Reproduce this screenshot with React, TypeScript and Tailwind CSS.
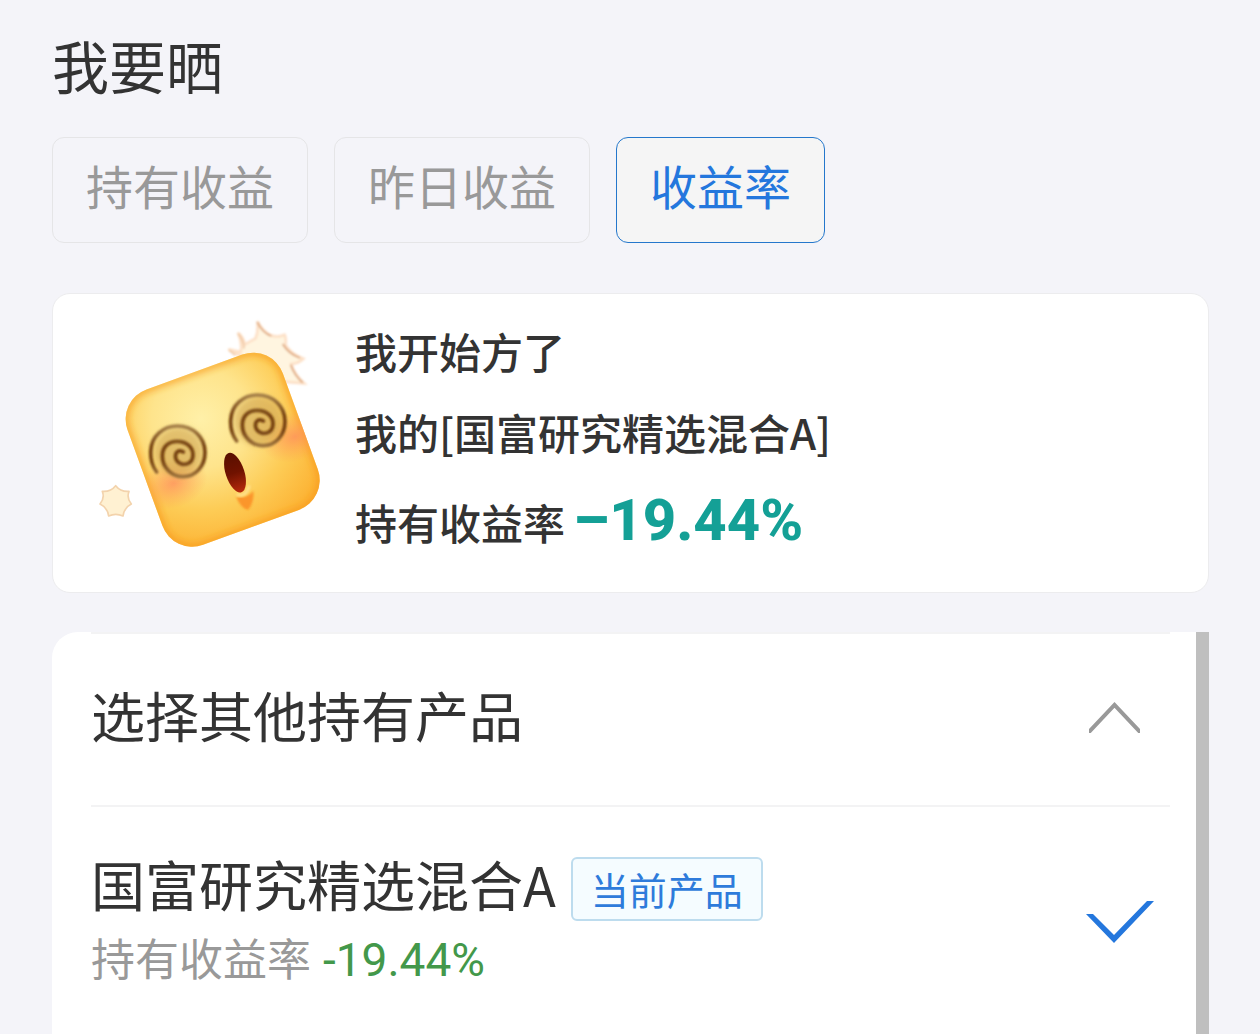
import { useState } from "react";
import clsx from "clsx";

const tabs = [
    { id: 1, label: "持有收益" },
    { id: 2, label: "昨日收益" },
    { id: 3, label: "收益率" },
];

const products = [{ id: 1, name: "国富研究精选混合A", rate: "-19.44%" }];

const SPIRAL =
    "M230 516 C218 500 211 478 212 454 C214 408 250 378 292 378 C340 378 374 412 375 456 C375 500 346 530 310 530 C274 530 247 502 247 468 C247 438 268 424 291 424 C320 424 340 442 339 466 C338 486 324 494 308 493 C290 490 283 474 288 460 C292 452 302 450 310 456";

const DizzyFace = () => (
    <svg
        viewBox="0 0 780 810"
        className="mt-[6px] h-[270px] w-[260px] shrink-0"
        aria-hidden="true"
    >
        <defs>
            <radialGradient id="face" cx="0.44" cy="0.28" r="0.85">
                <stop offset="0" stopColor="#fff0a8" />
                <stop offset="0.35" stopColor="#fee48c" />
                <stop offset="0.65" stopColor="#fdcc56" />
                <stop offset="1" stopColor="#fcae2e" />
            </radialGradient>
            <radialGradient id="blush">
                <stop offset="0" stopColor="#ff8c5c" stopOpacity="0.75" />
                <stop offset="1" stopColor="#ff9a50" stopOpacity="0" />
            </radialGradient>
            <linearGradient id="mouth" x1="0" y1="0" x2="0" y2="1">
                <stop offset="0" stopColor="#581000" />
                <stop offset="0.5" stopColor="#701200" />
                <stop offset="1" stopColor="#b82a0c" />
            </linearGradient>
            <linearGradient id="swirl" x1="0" y1="0" x2="0" y2="1">
                <stop offset="0" stopColor="#a58048" />
                <stop offset="0.4" stopColor="#74400f" />
                <stop offset="0.7" stopColor="#74400f" />
                <stop offset="1" stopColor="#9c733c" />
            </linearGradient>
            <clipPath id="faceClip">
                <rect x="180" y="201" width="496" height="496" rx="95" transform="rotate(-20 428 449)" />
            </clipPath>
            <filter id="soft" x="-20%" y="-20%" width="140%" height="140%">
                <feGaussianBlur stdDeviation="3" />
            </filter>
            <filter id="softer" x="-30%" y="-30%" width="160%" height="160%">
                <feGaussianBlur stdDeviation="9" />
            </filter>
        </defs>

        <g filter="url(#soft)">
            <path
                d="M445 148 L482 168 L610 245 L672 250 Q642 222 634 192 Q655 190 670 176 Q632 162 616 134 Q620 118 614 104 Q592 114 572 106 Q548 94 532 64 Q536 96 526 116 Q510 124 494 134 Q492 114 474 98 Q488 130 482 156 Z"
                fill="#fff5e0"
                stroke="#fde0c6"
                strokeWidth="8"
            />
            <path
                d="M532 66 Q546 98 574 108 M608 132 Q626 162 660 174 M632 194 Q642 224 668 248"
                fill="none"
                stroke="#dca378"
                strokeWidth="5"
            />
            <path
                d="M474 100 Q492 120 492 146 M447 150 L466 166"
                fill="none"
                stroke="#f0c8a4"
                strokeWidth="5"
            />
        </g>

        <path
            d="M107 557 Q122 576 147 574 Q139 594 154 612 Q133 622 129 648 Q107 638 86 648 Q82 622 60 612 Q75 594 67 574 Q92 576 107 557 Z"
            fill="#fff1d2"
            stroke="#f3d3ac"
            strokeWidth="5"
            strokeLinejoin="round"
        />

        <rect
            x="180"
            y="201"
            width="496"
            height="496"
            rx="95"
            transform="rotate(-20 428 449)"
            fill="url(#face)"
        />
        <g clipPath="url(#faceClip)">
            <rect
                x="180"
                y="201"
                width="496"
                height="496"
                rx="95"
                transform="rotate(-20 428 449)"
                fill="none"
                stroke="#f79a1c"
                strokeWidth="22"
                strokeOpacity="0.65"
                filter="url(#softer)"
            />
            <ellipse cx="280" cy="550" rx="105" ry="74" transform="rotate(-20 280 550)" fill="url(#blush)" />
            <ellipse cx="645" cy="410" rx="105" ry="74" transform="rotate(-20 645 410)" fill="url(#blush)" />
        </g>

        {["translate(0 0)", "translate(240 -93)"].map(move => (
            <g key={move} transform={move}>
                <circle cx="296" cy="455" r="74" fill="#cfa450" fillOpacity="0.6" filter="url(#softer)" />
                <path
                    d={SPIRAL}
                    fill="none"
                    stroke="url(#swirl)"
                    strokeWidth="11"
                    strokeLinecap="round"
                    filter="url(#soft)"
                />
            </g>
        ))}

        <path d="M468 590 Q500 596 520 572 Q524 606 504 630 Q482 624 468 590 Z" fill="#fb8a22" fillOpacity="0.8" filter="url(#soft)" />
        <path d="M470 584 Q498 594 508 556" fill="none" stroke="#ffe08a" strokeWidth="9" filter="url(#soft)" />
        <ellipse cx="465" cy="518" rx="28" ry="62" transform="rotate(-18 465 518)" fill="url(#mouth)" />
    </svg>
);

const ChevronUp = () => (
    <svg viewBox="0 0 51 36" className="h-9 w-[51px]" fill="none" aria-hidden="true">
        <path d="M-1 36 L25.5 8 L52 36" stroke="#999999" strokeWidth="4" />
    </svg>
);

const CheckMark = () => (
    <svg viewBox="0 0 68 42" className="h-[42px] w-[68px]" aria-hidden="true">
        <path d="M0 13 H7 L28 34 L61 0 H68 L28 42 Z" fill="#2477dd" />
    </svg>
);

const ShareCard = () => (
    <section className="mt-[50px] flex items-start rounded-[18px] border border-[#ececee] bg-white pl-[27px]">
        <DizzyFace />
        <div className="ml-[15px] pt-4 pb-[22px] text-[42px] font-medium text-[#333333]">
            <h2 className="leading-[81px]">我开始方了</h2>
            <p className="leading-[81px]">我的[国富研究精选混合A]</p>
            <p className="flex items-baseline leading-[97px]">
                <span>持有收益率</span>
                <strong className="ml-2 font-['Roboto'] text-[58px] font-extrabold text-[#14a096]">–19.44%</strong>
            </p>
        </div>
    </section>
);

const ProductList = () => {
    const [open, setOpen] = useState(true);
    const [current, setCurrent] = useState(1);

    return (
        <section className="mt-[39px] flex flex-1 overflow-hidden rounded-tl-[26px] bg-white">
            <div className="flex-1 pr-[26px] pl-[39px]">
                <button
                    type="button"
                    aria-expanded={open}
                    onClick={() => setOpen(!open)}
                    className="flex w-full items-center justify-between border-y-2 border-[#f3f3f4] pt-[45px] pr-[30px] pb-[54px] text-[54px] leading-[72px] text-[#333333]"
                >
                    <span>选择其他持有产品</span>
                    <ChevronUp />
                </button>
                {open &&
                    products.map(product => (
                        <button
                            type="button"
                            key={product.id}
                            onClick={() => setCurrent(product.id)}
                            className="flex w-full items-center justify-between pt-10 pr-4 text-left"
                        >
                            <span>
                                <span className="flex items-end">
                                    <span className="text-[54px] leading-[74px] text-[#333333]">{product.name}</span>
                                    <span className="ml-[15px] rounded-md border-2 border-[#bddcee] bg-[#f5fcff] px-[18px] text-[38px] leading-[60px] text-[#2e7bdb]">
                                        当前产品
                                    </span>
                                </span>
                                <span className="flex items-baseline text-[44px] leading-[72px] text-[#999999]">
                                    <span>持有收益率</span>
                                    <span className="ml-3 font-['Roboto'] text-[46px] text-[#43984a]">{product.rate}</span>
                                </span>
                            </span>
                            {current === product.id && <CheckMark />}
                        </button>
                    ))}
            </div>
            <div className="w-[13px] bg-[#bfbfbf]" />
        </section>
    );
};

export default function App() {
    const [active, setActive] = useState(3);

    return (
        <main className="flex min-h-screen flex-col bg-[#f4f4f9] pt-7 pr-[51px] pl-[52px] font-['Noto_Sans_CJK_SC',sans-serif]">
            <h1 className="text-[57px] leading-[73px] text-[#333333]">我要晒</h1>
            <div className="mt-9 flex gap-[26px]">
                {tabs.map(tab => (
                    <button
                        type="button"
                        key={tab.id}
                        aria-pressed={active === tab.id}
                        onClick={() => setActive(tab.id)}
                        className={clsx(
                            "rounded-xl border px-[33px] pt-[13px] pb-[23px] text-[47px] leading-[68px] whitespace-nowrap",
                            active === tab.id
                                ? "border-[#2477cc] bg-[#f5f5f5] text-[#2477dd]"
                                : "border-[#e5e5e7] text-[#999999]"
                        )}
                    >
                        {tab.label}
                    </button>
                ))}
            </div>
            <ShareCard />
            <ProductList />
        </main>
    );
}
